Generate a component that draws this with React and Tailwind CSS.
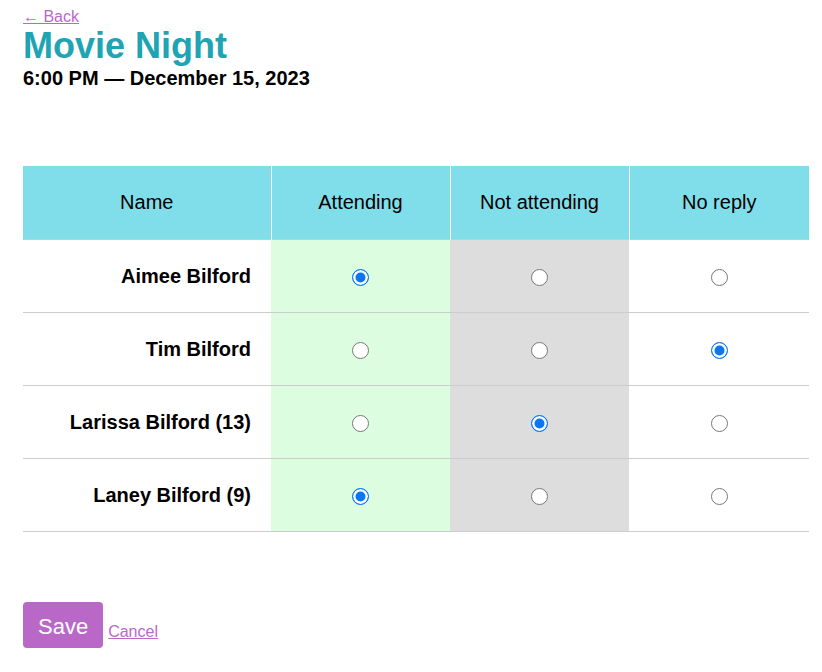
import React, { useState } from 'react';

const people = [
  { id: 1, name: 'Aimee Bilford', reply: 'yes' },
  { id: 2, name: 'Tim Bilford', reply: 'none' },
  { id: 3, name: 'Larissa Bilford (13)', reply: 'no' },
  { id: 4, name: 'Laney Bilford (9)', reply: 'yes' },
];

const options = [
  { value: 'yes', cell: 'bg-[#dcfddf]' },
  { value: 'no', cell: 'bg-[#dddddd]' },
  { value: 'none', cell: 'bg-white' },
];

const Radio = ({ checked, onChange, name }) => (
  <input
    type="radio"
    name={name}
    checked={checked}
    onChange={onChange}
    className="appearance-none w-[17px] h-[17px] rounded-full border-[1.5px] border-[#777] bg-white align-middle m-0 checked:border-[#0a76f6] checked:bg-[#0a76f6] checked:shadow-[inset_0_0_0_2.5px_white] cursor-pointer"
  />
);

const App = () => {
  const [replies, setReplies] = useState(
    Object.fromEntries(people.map((p) => [p.id, p.reply]))
  );

  return (
    <div className="min-h-[672px] bg-white pl-[23px] pt-[8px] text-black" style={{ fontFamily: '"Liberation Sans", Arial, sans-serif' }}>
      <a href="#" className="block w-fit text-[16px] leading-[18px] text-[#ba68c8] underline">
        ← Back
      </a>
      <h1 className="text-[36px] leading-[40px] font-bold text-[#1fa4b4]">Movie Night</h1>
      <p className="mt-[1px] text-[20px] leading-[23px] font-bold">6:00 PM — December 15, 2023</p>

      <table className="mt-[76px] w-[786px] border-collapse table-fixed text-[20px]">
        <colgroup>
          <col className="w-[248px]" />
          <col className="w-[179px]" />
          <col className="w-[179px]" />
          <col className="w-[180px]" />
        </colgroup>
        <thead>
          <tr className="h-[73px] bg-[#80deea] border-b border-[#cccccc]">
            <th className="font-normal border-r border-white">Name</th>
            <th className="font-normal border-r border-white">Attending</th>
            <th className="font-normal border-r border-white">Not attending</th>
            <th className="font-normal">No reply</th>
          </tr>
        </thead>
        <tbody>
          {people.map((p) => (
            <tr key={p.id} className="h-[73px] border-b border-[#cccccc]">
              <td className="text-right font-bold pr-[20px]">{p.name}</td>
              {options.map((o) => (
                <td key={o.value} className={`${o.cell} text-center`}>
                  <Radio
                    name={`reply-${p.id}`}
                    checked={replies[p.id] === o.value}
                    onChange={() => setReplies({ ...replies, [p.id]: o.value })}
                  />
                </td>
              ))}
            </tr>
          ))}
        </tbody>
      </table>

      <div className="mt-[70px] flex items-end gap-[5px]">
        <button className="h-[46px] px-[15px] pt-[3px] rounded-[4px] bg-[#ba68c8] text-white text-[22px]">Save</button>
        <a href="#" className="mb-[7px] text-[16px] leading-[18px] text-[#ba68c8] underline">
          Cancel
        </a>
      </div>
    </div>
  );
};

export default App;
